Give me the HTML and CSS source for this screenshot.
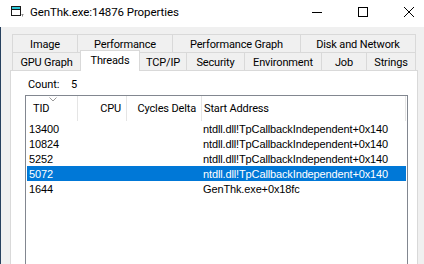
FILE: index.html
```html
<!DOCTYPE html>
<html>
<head>
<meta charset="utf-8">
<title>GenThk.exe:14876 Properties</title>
<link rel="stylesheet" href="styles.css">
</head>
<body>
<div class="titlebar">
  <svg class="appicon" width="14" height="12" viewBox="0 0 14 12">
    <rect x="0.5" y="0.5" width="9" height="9" fill="#ffffff" stroke="#1a1a1a"/>
    <rect x="1" y="1" width="8" height="2" fill="#2cc6d6"/>
    <line x1="1" y1="3.5" x2="9" y2="3.5" stroke="#1a1a1a"/>
    <path d="M10.5 8.5h2M11.5 8.5v2" stroke="#8a8a8a"/>
  </svg>
  <span class="title">GenThk.exe:14876 Properties</span>
  <div class="controls">
    <div class="ctl"><svg width="10" height="10" viewBox="0 0 10 10"><line x1="0" y1="5.5" x2="10" y2="5.5" stroke="#000"/></svg></div>
    <div class="ctl"><svg width="10" height="10" viewBox="0 0 10 10"><rect x="0.5" y="0.5" width="9" height="9" fill="none" stroke="#000"/></svg></div>
    <div class="ctl"><svg width="10" height="10" viewBox="0 0 10 10"><path d="M0 0L10 10M10 0L0 10" stroke="#000" stroke-width="1"/></svg></div>
  </div>
</div>
<div class="frame">
  <div class="tabs">
    <div class="tabrow">
      <div class="tab t-image">Image</div>
      <div class="tab t-perf">Performance</div>
      <div class="tab t-pgraph">Performance Graph</div>
      <div class="tab t-disk">Disk and Network</div>
    </div>
    <div class="tabrow">
      <div class="tab t-gpu">GPU Graph</div>
      <div class="tab t-threads sel">Threads</div>
      <div class="tab t-tcp">TCP/IP</div>
      <div class="tab t-sec">Security</div>
      <div class="tab t-env">Environment</div>
      <div class="tab t-job">Job</div>
      <div class="tab t-str">Strings</div>
    </div>
  </div>
  <div class="panel">
    <div class="count"><span class="count-label">Count:</span><span class="count-val">5</span></div>
    <div class="list">
      <div class="lhead">
        <div class="hc h-tid">TID<svg class="sort" width="8" height="5" viewBox="0 0 8 5"><path d="M0.5 0.5L4 4L7.5 0.5" fill="none" stroke="#9a9a9a"/></svg></div>
        <div class="hc h-cpu">CPU</div>
        <div class="hc h-cyc">Cycles Delta</div>
        <div class="hc h-addr">Start Address</div>
      </div>
      <div class="lrow"><span class="c c-tid">13400</span><span class="c c-cpu"></span><span class="c c-cyc"></span><span class="c c-addr">ntdll.dll!TpCallbackIndependent+0x140</span></div>
      <div class="lrow"><span class="c c-tid">10824</span><span class="c c-cpu"></span><span class="c c-cyc"></span><span class="c c-addr">ntdll.dll!TpCallbackIndependent+0x140</span></div>
      <div class="lrow"><span class="c c-tid">5252</span><span class="c c-cpu"></span><span class="c c-cyc"></span><span class="c c-addr">ntdll.dll!TpCallbackIndependent+0x140</span></div>
      <div class="lrow selected"><span class="c c-tid">5072</span><span class="c c-cpu"></span><span class="c c-cyc"></span><span class="c c-addr">ntdll.dll!TpCallbackIndependent+0x140</span></div>
      <div class="lrow"><span class="c c-tid">1644</span><span class="c c-cpu"></span><span class="c c-cyc"></span><span class="c c-addr">GenThk.exe+0x18fc</span></div>
    </div>
  </div>
</div>
</body>
</html>
```
FILE: styles.css
```css
html, body {
  margin: 0;
  padding: 0;
}
body {
  width: 424px;
  height: 264px;
  overflow: hidden;
  background: #f0f0f0;
  font-family: "Roboto", "Liberation Sans", sans-serif;
  color: #000;
}

/* title bar */
.titlebar {
  height: 27px;
  background: #ffffff;
  display: flex;
  align-items: flex-start;
}
.appicon {
  margin-left: 11px;
  margin-top: 6px;
  flex: none;
}
.title {
  margin-left: 5px;
  padding-top: 5px;
  font-size: 11.5px;
  line-height: 14px;
  letter-spacing: -0.08px;
  white-space: nowrap;
}
.controls {
  margin-left: auto;
  margin-right: -8px;
  display: flex;
  flex: none;
}
.ctl {
  width: 46px;
  height: 27px;
  display: flex;
  align-items: flex-start;
  justify-content: center;
  padding-top: 7px;
  box-sizing: border-box;
}

/* dialog frame */
.frame {
  border-left: 1px solid #27415f;
  height: 237px;
  box-sizing: border-box;
}
.tabs {
  padding-top: 7px;
  padding-left: 11px;
}
.tabrow {
  display: flex;
  height: 18px;
}
.tab {
  box-sizing: border-box;
  height: 18px;
  border: 1px solid #d9d9d9;
  border-bottom: none;
  margin-left: -1px;
  background: #f0f0f0;
  text-align: center;
  padding-top: 2px;
  font-size: 11px;
  line-height: 15px;
  letter-spacing: -0.15px;
  white-space: nowrap;
  flex: none;
}
.tab:first-child {
  margin-left: 0;
}
.tab.sel {
  background: #ffffff;
  margin-top: -2px;
  height: 21px;
  padding-top: 1.5px;
  position: relative;
  z-index: 1;
}
.t-image { width: 66px; }
.t-perf { width: 96px; }
.t-pgraph { width: 129px; }
.t-disk { width: 116px; }
.t-gpu { width: 69px; }
.t-threads { width: 60px; }
.t-tcp { width: 48px; }
.t-sec { width: 59px; }
.t-env { width: 78px; }
.t-job { width: 46px; }
.t-str { width: 50px; }

/* tab page */
.panel {
  margin-left: 9px;
  width: 408px;
  height: 200px;
  box-sizing: border-box;
  border: 1px solid #d9d9d9;
  background: #ffffff;
  padding: 7px 0 0 17px;
}
.count {
  font-size: 11px;
  line-height: 14px;
  letter-spacing: -0.1px;
  display: flex;
}
.count-label {
  width: 43px;
}
.list {
  margin-left: -3px;
  margin-top: 3px;
  width: 383px;
  height: 180px;
  box-sizing: border-box;
  border: 1px solid #828790;
  background: #ffffff;
}
.lhead {
  display: flex;
  height: 25px;
}
.hc {
  box-sizing: border-box;
  height: 25px;
  border-right: 1px solid #e5e5e5;
  font-size: 11px;
  line-height: 25px;
  letter-spacing: -0.15px;
  white-space: nowrap;
  flex: none;
}
.h-tid {
  width: 52px;
  padding-left: 7px;
  position: relative;
}
.sort {
  position: absolute;
  left: 23px;
  top: 1px;
}
.h-cpu {
  width: 49px;
  text-align: right;
  padding-right: 5px;
}
.h-cyc {
  width: 75px;
  text-align: right;
  padding-right: 5px;
}
.h-addr {
  width: 204px;
  padding-left: 2px;
}
.lrow {
  display: flex;
  height: 15px;
  width: 379px;
  margin-left: 1px;
  font-family: "Liberation Sans", Arial, sans-serif;
  font-size: 11px;
  line-height: 14px;
  letter-spacing: -0.13px;
  color: #000;
}
.lrow.selected {
  background: #0078d7;
  color: #ffffff;
}
.c {
  display: block;
  box-sizing: border-box;
  padding-top: 1px;
  white-space: nowrap;
  flex: none;
}
.c-tid { width: 51px; padding-left: 2px; }
.c-cpu { width: 49px; }
.c-cyc { width: 75px; }
.c-addr { width: 204px; padding-left: 1px; }
```
